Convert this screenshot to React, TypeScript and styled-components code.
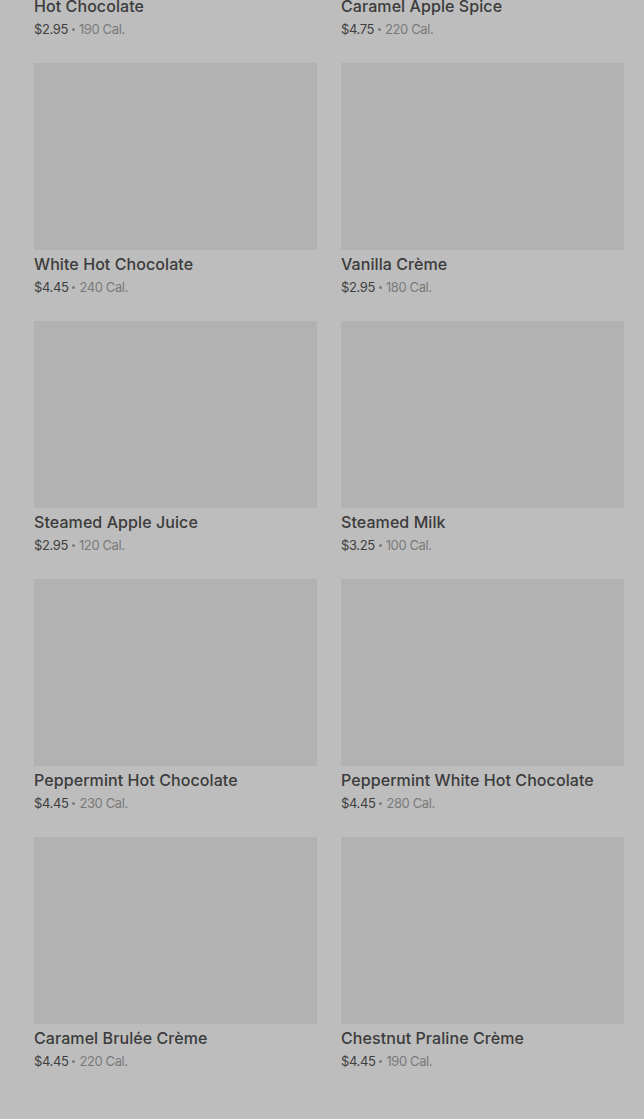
import React from "react";
import styled, {createGlobalStyle} from "styled-components";

const GlobalStyle = createGlobalStyle`
    html, body {
        margin: 0;
        padding: 0;
        background: #bdbdbd;
        overflow: hidden;
    }
    body {
        font-family: "Inter", "Roboto", "Liberation Sans", sans-serif;
        -webkit-font-smoothing: antialiased;
    }
`;

const Page = styled.div`
    width: 644px;
    height: 1119px;
    overflow: hidden;
    background: #bdbdbd;
`;

const Grid = styled.ul`
    list-style: none;
    margin: -195px 0 0 0;
    padding: 0 20px 0 34px;
    display: grid;
    grid-template-columns: 283px 283px;
    column-gap: 24px;
    row-gap: 26px;
`;

const Card = styled.li`
    display: flex;
    flex-direction: column;
`;

const Thumb = styled.div`
    height: 187px;
    background: #b2b2b2;
`;

const Name = styled.h3`
    margin: 4px 0 0 0;
    height: 20px;
    font-size: 16px;
    line-height: 20px;
    font-weight: 500;
    color: #3b3b3b;
    letter-spacing: 0.005em;
`;

const Meta = styled.p`
    margin: 5px 0 0 0;
    height: 16px;
    font-size: 13px;
    line-height: 16px;
    color: #3f3f3f;
    letter-spacing: -0.03em;
`;

const Cal = styled.span`
    color: #7a7a7a;
`;

const Dot = styled.span`
    display: inline-block;
    width: 3px;
    height: 3px;
    border-radius: 50%;
    background: #7a7a7a;
    vertical-align: middle;
    margin: 0 4px 2px 4px;
`;

const drinks = [
  {name: "Hot Chocolate", price: "$2.95", cal: 190},
  {name: "Caramel Apple Spice", price: "$4.75", cal: 220},
  {name: "White Hot Chocolate", price: "$4.45", cal: 240},
  {name: "Vanilla Crème", price: "$2.95", cal: 180},
  {name: "Steamed Apple Juice", price: "$2.95", cal: 120},
  {name: "Steamed Milk", price: "$3.25", cal: 100},
  {name: "Peppermint Hot Chocolate", price: "$4.45", cal: 230},
  {name: "Peppermint White Hot Chocolate", price: "$4.45", cal: 280},
  {name: "Caramel Brulée Crème", price: "$4.45", cal: 220},
  {name: "Chestnut Praline Crème", price: "$4.45", cal: 190},
];

const App = () => (
  <Page>
    <GlobalStyle/>
    <Grid>
      {
        drinks.map((d, i) => (
          <Card key={i}>
            <Thumb/>
            <Name>{d.name}</Name>
            <Meta>{d.price}<Dot/><Cal>{d.cal} Cal.</Cal></Meta>
          </Card>
        ))
      }
    </Grid>
  </Page>
);

export default App;
